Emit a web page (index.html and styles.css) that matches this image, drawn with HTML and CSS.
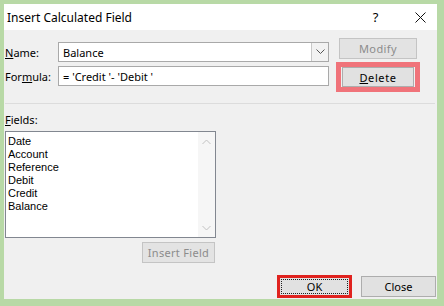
FILE: index.html
```html
<!DOCTYPE html>
<html lang="en">
<head>
    <meta charset="UTF-8">
    <title>Insert Calculated Field</title>
    <link rel="stylesheet" href="styles.css">
</head>
<body>

    <div class="dialog">
        <div class="titlebar">
            <span class="title">Insert Calculated Field</span>
            <span class="help">?</span>
            <svg class="close-x" width="11" height="11" viewBox="0 0 11 11">
                <path d="M0.5 0.5 L10.5 10.5 M10.5 0.5 L0.5 10.5" stroke="#111" stroke-width="1" fill="none"/>
            </svg>
        </div>

        <div class="content">
            <div class="top">
                <div class="form">
                    <div class="row">
                        <label class="label"><u>N</u>ame:</label>
                        <div class="combo">
                            <span class="combo-text">Balance</span>
                            <span class="drop">
                                <svg width="9" height="6" viewBox="0 0 9 6"><path d="M0.5 0.5 L4.5 4.5 L8.5 0.5" stroke="#555" fill="none"/></svg>
                            </span>
                        </div>
                    </div>
                    <div class="row">
                        <label class="label">For<u>m</u>ula:</label>
                        <div class="textbox">= 'Credit '- 'Debit '</div>
                    </div>
                </div>

                <div class="side">
                    <button class="btn btn-modify" disabled>Modify</button>
                    <div class="mark-pink">
                        <button class="btn btn-delete"><u>D</u>elete</button>
                    </div>
                </div>
            </div>

            <div class="separator"></div>

            <div class="fields-label"><u>F</u>ields:</div>
            <div class="listbox">
                <ul class="items">
                    <li>Date</li>
                    <li>Account</li>
                    <li>Reference</li>
                    <li>Debit</li>
                    <li>Credit</li>
                    <li>Balance</li>
                </ul>
                <div class="scrollbar">
                    <svg width="9" height="6" viewBox="0 0 9 6"><path d="M0.5 5 L4.5 1 L8.5 5" stroke="#c2c2c2" fill="none"/></svg>
                    <svg width="9" height="6" viewBox="0 0 9 6"><path d="M0.5 1 L4.5 5 L8.5 1" stroke="#c2c2c2" fill="none"/></svg>
                </div>
            </div>

            <div class="insert-row">
                <button class="btn btn-insert" disabled>Insert Field</button>
            </div>

            <div class="footer">
                <div class="mark-red">
                    <button class="btn btn-ok"><span class="focus">OK</span></button>
                </div>
                <button class="btn btn-close">Close</button>
            </div>
        </div>
    </div>

</body>
</html>
```

FILE: styles.css
```css
* {
    box-sizing: border-box;
}

body {
    margin: 0;
    padding: 4px 7px 7px 4px;
    background-color: #b8d9a6;
    font-family: "Noto Sans", Arial, sans-serif;
    font-size: 11px;
    color: #000;
}

.dialog {
    width: 433px;
    height: 295px;
    background-color: #f0f0f0;
}

.titlebar {
    height: 26px;
    background-color: #fff;
    display: flex;
    align-items: center;
    padding: 0 11px 0 3px;
    font-size: 12px;
}

.title {
    flex: 1;
}

.help {
    width: 11px;
    text-align: center;
    margin-right: 34px;
    font-size: 13px;
}

.content {
    padding: 0 1px;
}

/* name / formula block */
.top {
    display: flex;
    align-items: flex-start;
}

.form {
    margin-top: 12px;
    width: 324px;
}

.row {
    display: flex;
    align-items: center;
    height: 20px;
    margin-bottom: 4px;
}

.label {
    width: 53px;
}

.combo, .textbox {
    flex: 1;
    height: 20px;
    background-color: #fff;
    border: 1px solid #a9a9a9;
    display: flex;
    align-items: center;
    padding-left: 4px;
}

.combo-text {
    flex: 1;
}

.drop {
    width: 17px;
    height: 18px;
    border-left: 1px solid #c8c8c8;
    background-color: #f2f2f2;
    display: flex;
    align-items: center;
    justify-content: center;
}

.side {
    margin-left: 7px;
    margin-top: 8px;
    width: 84px;
}

.btn {
    font-family: inherit;
    font-size: 11px;
    background-color: #e1e1e1;
    border: 1px solid #adadad;
    color: #000;
    padding: 0;
    height: 21px;
}

.btn:disabled {
    background-color: #e3e3e3;
    border-color: #c4c4c4;
    color: #8c8c8c;
}

.btn-modify {
    width: 78px;
    margin-left: 3px;
    display: block;
    letter-spacing: 0.4px;
}

.mark-pink {
    margin-top: 3px;
    border: 5px solid #f0737a;
    padding: 0 1px;
    height: 30px;
}

.btn-delete {
    width: 100%;
    height: 20px;
    letter-spacing: 0.6px;
}

.separator {
    margin-top: 11px;
    width: 430px;
    border-top: 1px solid #dcdcdc;
}

.fields-label {
    margin-top: 8px;
    line-height: 16px;
}

/* field list */
.listbox {
    margin-top: 3px;
    width: 211px;
    height: 107px;
    background-color: #fff;
    border: 1px solid #828790;
    display: flex;
}

.items {
    list-style: none;
    margin: 0;
    padding: 3px 0 0 2px;
    flex: 1;
    font-family: "Liberation Sans", Arial, sans-serif;
    font-size: 11px;
}

.items li {
    line-height: 13px;
}

.scrollbar {
    width: 17px;
    background-color: #f6f6f6;
    display: flex;
    flex-direction: column;
    justify-content: space-between;
    align-items: center;
    padding: 7px 0 6px;
}

.insert-row {
    margin-top: 4px;
    padding-left: 137px;
}

.btn-insert {
    width: 73px;
    letter-spacing: 0.3px;
}

/* bottom buttons */
.footer {
    margin-top: 12px;
    display: flex;
    justify-content: flex-end;
    align-items: center;
    gap: 9px;
}

.mark-red {
    width: 75px;
    height: 23px;
    border: 3px solid #e0231f;
}

.btn-ok {
    width: 100%;
    height: 100%;
    border: none;
    padding: 1px;
    display: block;
}

.focus {
    display: block;
    height: 100%;
    border: 1px dotted #222;
    line-height: 13px;
}

.btn-close {
    width: 75px;
}
```
